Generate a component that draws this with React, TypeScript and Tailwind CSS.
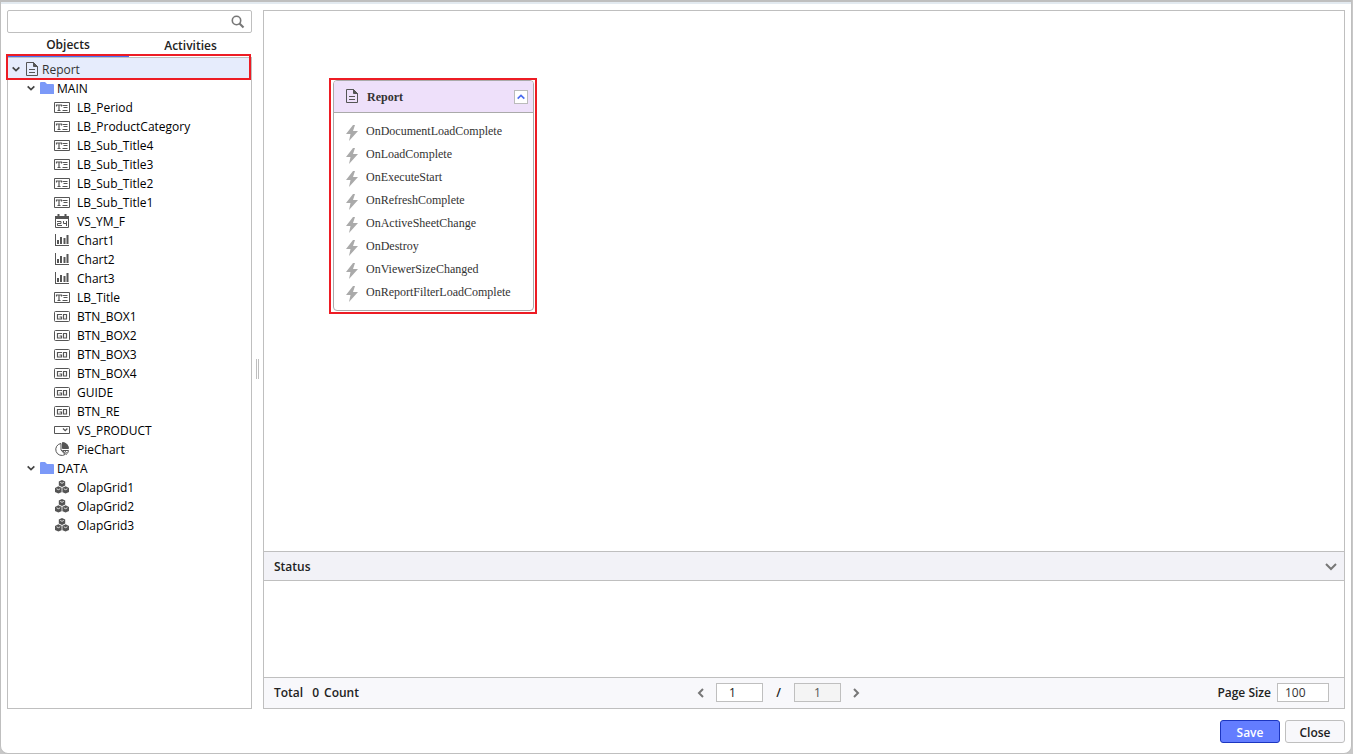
import { useState } from "react";

type IconName = "label" | "calendar" | "chart" | "button" | "combo" | "pie" | "grid";

const mainItems: { name: string; icon: IconName }[] = [
  { name: "LB_Period", icon: "label" },
  { name: "LB_ProductCategory", icon: "label" },
  { name: "LB_Sub_Title4", icon: "label" },
  { name: "LB_Sub_Title3", icon: "label" },
  { name: "LB_Sub_Title2", icon: "label" },
  { name: "LB_Sub_Title1", icon: "label" },
  { name: "VS_YM_F", icon: "calendar" },
  { name: "Chart1", icon: "chart" },
  { name: "Chart2", icon: "chart" },
  { name: "Chart3", icon: "chart" },
  { name: "LB_Title", icon: "label" },
  { name: "BTN_BOX1", icon: "button" },
  { name: "BTN_BOX2", icon: "button" },
  { name: "BTN_BOX3", icon: "button" },
  { name: "BTN_BOX4", icon: "button" },
  { name: "GUIDE", icon: "button" },
  { name: "BTN_RE", icon: "button" },
  { name: "VS_PRODUCT", icon: "combo" },
  { name: "PieChart", icon: "pie" },
];

const dataItems: { name: string; icon: IconName }[] = [
  { name: "OlapGrid1", icon: "grid" },
  { name: "OlapGrid2", icon: "grid" },
  { name: "OlapGrid3", icon: "grid" },
];

const events = [
  "OnDocumentLoadComplete",
  "OnLoadComplete",
  "OnExecuteStart",
  "OnRefreshComplete",
  "OnActiveSheetChange",
  "OnDestroy",
  "OnViewerSizeChanged",
  "OnReportFilterLoadComplete",
];

const iconShapes = {
  label: (
    <g fill="none" stroke="#555">
      <path d="M.5 3.5h15v10H.5z" />
      <path d="M2.5 7.5v-1.5h5v1.5M5 6v5" strokeWidth="1.2" />
      <path d="M3.5 11.5h3M8.5 6.5h5M9.500 8.500h4M8.500 11.500h5" />
    </g>
  ),
  calendar: (
    <g fill="none" stroke="#555">
      <path d="M1.500 3.500h13v11h-13z" />
      <path d="M1 4.500h14" strokeWidth="3" />
      <path d="M4.500 1v3M11.500 1v3" strokeWidth="2" />
      <path d="M3 8.500h4v2H3.500v2H8M9.500 8v2.500h3.500M12.500 8v5" />
    </g>
  ),
  chart: (
    <g fill="#555">
      <path d="M1 2h1v11h13v1H1z" />
      <path d="M3 8h2v4H3zM6 5h2v7H6zM9.500 6h2v6h-2zM12.500 3h2v9h-2z" />
    </g>
  ),
  button: (
    <g fill="none" stroke="#555">
      <rect x=".5" y="3.500" width="15" height="10" rx="1" />
      <path d="M8 6.500H3.500v4.500h4V9H5.500M9.500 6.500h3v4.500h-3z" strokeWidth="1.2" />
    </g>
  ),
  combo: (
    <g fill="none" stroke="#555">
      <path d="M.5 4.500h15v7H.5z" />
      <path d="M9 6.500l2.200 2.200 2.200-2.200" strokeWidth="1.300" />
    </g>
  ),
  pie: (
    <g fill="none" stroke="#555">
      <path d="M7 2.500a6 6 0 1 0 4 11L7 9z" />
      <path d="M8.500 1.500a6 6 0 0 1 6 6h-6z" fill="#555" />
      <path d="M8.500 9.500h6a5 5 0 0 1-2.500 4zM10.500 9.500l2 2.500" />
    </g>
  ),
  grid: (
    <g fill="#555">
      <path d="M8 1l3.200 1.600v3.800L8 8 4.800 6.400V2.600z" />
      <path d="M4.400 7.200L8 9v4l-3.600 1.600L1 13V9z" />
      <path d="M11.600 7.200L15 9v4l-3.400 1.600L8 13V9z" />
      <path
        d="M6.200 3.400L8 4.300l1.800-.9M2.600 9.800l1.800.9 1.800-.9M9.800 9.800l1.800.9 1.800-.9M8 9v4"
        stroke="#fff"
        strokeWidth=".8"
        fill="none"
      />
    </g>
  ),
};

function ObjectIcon({ name }: { name: IconName }) {
  return (
    <svg viewBox="0 0 16 16" className="mb-px h-4 w-4 shrink-0">
      {iconShapes[name]}
    </svg>
  );
}

function Chevron({ className, d }: { className: string; d: string }) {
  return (
    <svg viewBox="0 0 12 12" className={className} fill="none" stroke="currentColor" strokeWidth="2">
      <path d={d} />
    </svg>
  );
}

function DocumentIcon() {
  return (
    <svg viewBox="0 0 14 16" className="mb-px h-4 w-[14px] shrink-0" fill="none" stroke="#555">
      <path d="M1.500 1.500h7l4 4v9h-11z" />
      <path d="M8.500 1.500v4h4z" fill="#555" />
      <path d="M4 8.500h6M4 11.500h6" />
    </svg>
  );
}

function Folder({ name, items }: { name: string; items: { name: string; icon: IconName }[] }) {
  return (
    <li>
      <div className="flex h-[19px] items-center pl-[18px]">
        <Chevron className="mb-px h-[10px] w-[10px] text-[#444]" d="M2 4l4 4 4-4" />
        <svg viewBox="0 0 14 12" className="mb-px ml-1 h-3 w-[14px]" fill="#7b99f8">
          <path d="M0 1q0-1 1-1h4l2 2h6q1 0 1 1v9H0z" />
        </svg>
        <span className="ml-[3px]">{name}</span>
      </div>
      <ul>
        {items.map((item) => (
          <li key={item.name} className="flex h-[19px] items-center gap-[7px] pl-[46px]">
            <ObjectIcon name={item.icon} />
            <span>{item.name}</span>
          </li>
        ))}
      </ul>
    </li>
  );
}

function Sidebar() {
  const [tab, setTab] = useState("objects");

  return (
    <aside className="flex w-[245px] shrink-0 flex-col">
      <div className="flex h-[23px] shrink-0 items-center rounded-[2px] border border-[#bfbfbf] pr-1.5">
        <input type="text" aria-label="Search objects" className="h-full min-w-0 flex-1 px-2 outline-none" />
        <button aria-label="Search">
          <svg viewBox="0 0 14 14" className="h-[14px] w-[14px]" fill="none" stroke="#777" strokeWidth="1.600">
            <circle cx="5.500" cy="5.500" r="4.200" />
            <path d="M8.500 8.500l4 4" strokeWidth="2.200" />
          </svg>
        </button>
      </div>
      <div className="flex h-6 shrink-0 font-semibold text-[#222]">
        <button
          className={`w-[122px] border-b ${tab === "objects" ? "border-[#4a6cf0]" : "border-transparent"}`}
          onClick={() => setTab("objects")}
        >
          Objects
        </button>
        <button
          className={`flex-1 border-b pt-[3px] ${tab === "activities" ? "border-[#4a6cf0]" : "border-transparent"}`}
          onClick={() => setTab("activities")}
        >
          Activities
        </button>
      </div>
      <div className="flex-1 border border-[#bfbfbf]">
        <ul>
          <li>
            <div className="relative flex h-[21px] items-center bg-[#e6ecfc] pt-0.5 pl-[3px] text-[#333]">
              <Chevron className="mb-px h-[10px] w-[10px] text-[#444]" d="M2 4l4 4 4-4" />
              <span className="ml-1 flex">
                <DocumentIcon />
              </span>
              <span className="ml-[3px]">Report</span>
              {/* Highlight frame around the selected root */}
              <div className="pointer-events-none absolute -top-1 right-0 -bottom-px -left-0.5 border-2 border-[#ed1c24]" />
            </div>
            <ul>
              <Folder name="MAIN" items={mainItems} />
              <Folder name="DATA" items={dataItems} />
            </ul>
          </li>
        </ul>
      </div>
    </aside>
  );
}

function ReportNode() {
  return (
    <div className="absolute top-[67px] left-[65px] w-[208px] border-2 border-[#ed1c24] pr-px pb-px pl-0.5 font-['Liberation_Serif',serif]">
      <div className="rounded-[4px] border border-[#aaa] bg-white">
        <div className="flex h-8 items-center rounded-t-[3px] border-b border-[#aaa] bg-[#eee0fa] pr-[5px] pl-[11px]">
          <DocumentIcon />
          <h2 className="ml-2 flex-1 font-bold text-[#333]">Report</h2>
          <button
            aria-label="Collapse"
            className="flex h-[14px] w-[14px] items-center justify-center border border-[#bbb] bg-white text-[#4a6cf0]"
          >
            <Chevron className="h-[10px] w-[10px] shrink-0" d="M2 8l4-4 4 4" />
          </button>
        </div>
        <ul className="pt-1.5 pb-[7px]">
          {events.map((event) => (
            <li key={event} className="flex h-[23px] items-center gap-2 pl-3 text-[#333]">
              <svg viewBox="0 0 12 16" className="mt-1 h-4 w-3" fill="#aaa">
                <path d="M7 0L0 9h4.500L3 16l9-10H7L9 0z" />
              </svg>
              <span>{event}</span>
            </li>
          ))}
        </ul>
      </div>
    </div>
  );
}

function Footer() {
  return (
    <div className="flex h-[31px] shrink-0 items-center border-t border-[#bfbfbf] bg-[#f8f8fb] pb-px font-semibold text-[#222]">
      <div className="flex flex-1 pl-2.5">
        <span>Total</span>
        <span className="ml-[9px]">0</span>
        <span className="ml-[5px]">Count</span>
      </div>
      <nav className="mr-[46px] flex items-center text-[#222]">
        <button aria-label="Previous page">
          <Chevron className="h-3 w-3 text-[#777]" d="M8 2L4 6l4 4" />
        </button>
        <input
          aria-label="Page"
          defaultValue="1"
          className="ml-[9px] h-[19px] w-[47px] border border-[#bfbfbf] bg-white pl-3 font-normal"
        />
        <span className="w-[31px] text-center">/</span>
        <input
          aria-label="Page count"
          readOnly
          value="1"
          className="mr-[9px] h-[19px] w-[47px] border border-[#bfbfbf] bg-[#f4f4f4] text-center font-normal text-[#555]"
        />
        <button aria-label="Next page">
          <Chevron className="h-3 w-3 text-[#777]" d="M4 2l4 4-4 4" />
        </button>
      </nav>
      <div className="flex flex-1 items-center justify-end gap-1.5 pr-[15px]">
        <label htmlFor="page-size">Page Size</label>
        <input
          id="page-size"
          defaultValue="100"
          className="h-[19px] w-[52px] border border-[#bfbfbf] bg-white pl-[7px] font-normal text-[#333]"
        />
      </div>
    </div>
  );
}

export default function App() {
  return (
    <div className="h-screen min-h-[640px] bg-[#c8c8c8] pr-px font-['Open_Sans',sans-serif] text-[12px] leading-4 text-black">
      <div className="flex h-full flex-col rounded-b-lg border border-t-2 border-[#bfbfbf] bg-white">
        <div className="h-0.5 shrink-0 bg-[#e3eaf0]" />
        <main className="flex min-h-0 flex-1 px-1.5 pt-1.5">
          <Sidebar />
          <div className="flex w-[11px] shrink-0 items-center justify-center pt-[19px]">
            <div className="h-5 w-[3px] border-x border-[#bfbfbf]" />
          </div>
          <section className="flex min-w-0 flex-1 flex-col border border-[#bfbfbf]">
            <div className="relative flex-1">
              <ReportNode />
            </div>
            <div className="flex h-[30px] shrink-0 items-center justify-between border-y border-[#bfbfbf] bg-[#f2f2f7] pt-0.5 pr-[7px] pl-2.5">
              <h2 className="font-semibold text-[#222]">Status</h2>
              <button aria-label="Toggle status">
                <Chevron className="h-3 w-3 text-[#777]" d="M1 3l5 5 5-5" />
              </button>
            </div>
            <div className="h-24 shrink-0" />
            <Footer />
          </section>
        </main>
        <div className="flex shrink-0 justify-end gap-[5px] px-1.5 pt-[11px] pb-[10px] font-semibold">
          <button className="h-[23px] w-[60px] rounded-[3px] border border-[#1c36c0] bg-[#637dff] pt-0.5 text-white">
            Save
          </button>
          <button className="h-[23px] w-[60px] rounded-[3px] border border-[#bfbfbf] bg-[#f8f8fb] pt-0.5 text-[#222]">
            Close
          </button>
        </div>
      </div>
    </div>
  );
}
